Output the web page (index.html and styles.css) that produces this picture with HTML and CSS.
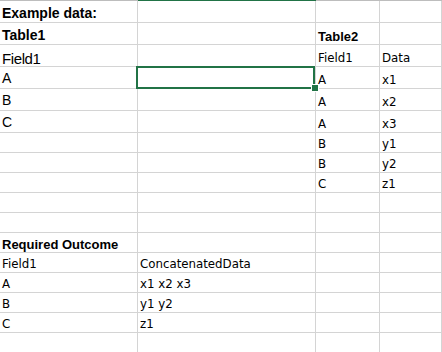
FILE: index.html
```html
<!DOCTYPE html>
<html>
<head>
<meta charset="utf-8">
<link rel="stylesheet" href="styles.css">
</head>
<body>
<div class="sheet">
  <div class="colhead"><div></div><div class="active"></div><div></div><div></div></div>
  <div class="row tall"><div class="cell h1">Example data:</div><div class="cell"></div><div class="cell"></div><div class="cell"></div></div>
  <div class="row tall"><div class="cell h1">Table1</div><div class="cell"></div><div class="cell h2">Table2</div><div class="cell"></div></div>
  <div class="row tall"><div class="cell big fld">Field1</div><div class="cell"></div><div class="cell small">Field1</div><div class="cell small">Data</div></div>
  <div class="row tall"><div class="cell big">A</div><div class="cell sel"></div><div class="cell small">A</div><div class="cell small">x1</div></div>
  <div class="row tall"><div class="cell big">B</div><div class="cell"></div><div class="cell small">A</div><div class="cell small">x2</div></div>
  <div class="row tall"><div class="cell big">C</div><div class="cell"></div><div class="cell small">A</div><div class="cell small">x3</div></div>
  <div class="row"><div class="cell"></div><div class="cell"></div><div class="cell small">B</div><div class="cell small">y1</div></div>
  <div class="row"><div class="cell"></div><div class="cell"></div><div class="cell small">B</div><div class="cell small">y2</div></div>
  <div class="row"><div class="cell"></div><div class="cell"></div><div class="cell small">C</div><div class="cell small">z1</div></div>
  <div class="row"><div class="cell"></div><div class="cell"></div><div class="cell"></div><div class="cell"></div></div>
  <div class="row"><div class="cell"></div><div class="cell"></div><div class="cell"></div><div class="cell"></div></div>
  <div class="row"><div class="cell h2">Required Outcome</div><div class="cell"></div><div class="cell"></div><div class="cell"></div></div>
  <div class="row"><div class="cell small">Field1</div><div class="cell small">ConcatenatedData</div><div class="cell"></div><div class="cell"></div></div>
  <div class="row"><div class="cell small">A</div><div class="cell small">x1 x2 x3</div><div class="cell"></div><div class="cell"></div></div>
  <div class="row"><div class="cell small">B</div><div class="cell small">y1 y2</div><div class="cell"></div><div class="cell"></div></div>
  <div class="row"><div class="cell small">C</div><div class="cell small">z1</div><div class="cell"></div><div class="cell"></div></div>
  <div class="row"><div class="cell"></div><div class="cell"></div><div class="cell"></div><div class="cell"></div></div>
</div>
</body>
</html>
```
FILE: styles.css
```css
html, body {
  margin: 0;
  padding: 0;
  background: #ffffff;
  overflow: hidden;
}
.sheet {
  width: 442px;
  height: 352px;
  overflow: hidden;
  color: #000;
}
.colhead,
.row {
  display: grid;
  grid-template-columns: 138px 178px 64px 62px;
}
.colhead {
  height: 1px;
}
.colhead > div {
  background: #bdbdbd;
}
.colhead > .active {
  background: #217346;
}
.row {
  height: 20px;
}
.row.tall {
  height: 22px;
}
.cell {
  box-sizing: border-box;
  display: flex;
  align-items: flex-end;
  padding-left: 2px;
  border-right: 1px solid #d4d4d4;
  border-bottom: 1px solid #d4d4d4;
  white-space: nowrap;
}
.h1 {
  font-family: "Liberation Sans", Arial, sans-serif;
  font-weight: bold;
  font-size: 14px;
  line-height: 14px;
  padding-bottom: 2px;
}
.h2 {
  font-family: "Liberation Sans", Arial, sans-serif;
  font-weight: bold;
  font-size: 13px;
  line-height: 13px;
  padding-bottom: 1px;
}
.big {
  font-family: "Liberation Sans", Arial, sans-serif;
  font-size: 14px;
  line-height: 14px;
  padding-bottom: 3px;
}
.big.fld {
  font-size: 15px;
  line-height: 15px;
  letter-spacing: -0.4px;
  padding-bottom: 0;
}
.small {
  font-family: "DejaVu Sans", Verdana, sans-serif;
  font-size: 11.8px;
  line-height: 12px;
  padding-bottom: 2px;
}
.sel {
  position: relative;
}
.sel::before {
  content: "";
  position: absolute;
  left: -2px;
  right: 0;
  top: -1px;
  bottom: -1px;
  border: 2px solid #217346;
}
.sel::after {
  content: "";
  position: absolute;
  right: -3px;
  bottom: -3px;
  width: 6px;
  height: 6px;
  background: #217346;
  box-shadow: 0 0 0 1px #ffffff;
}
```
